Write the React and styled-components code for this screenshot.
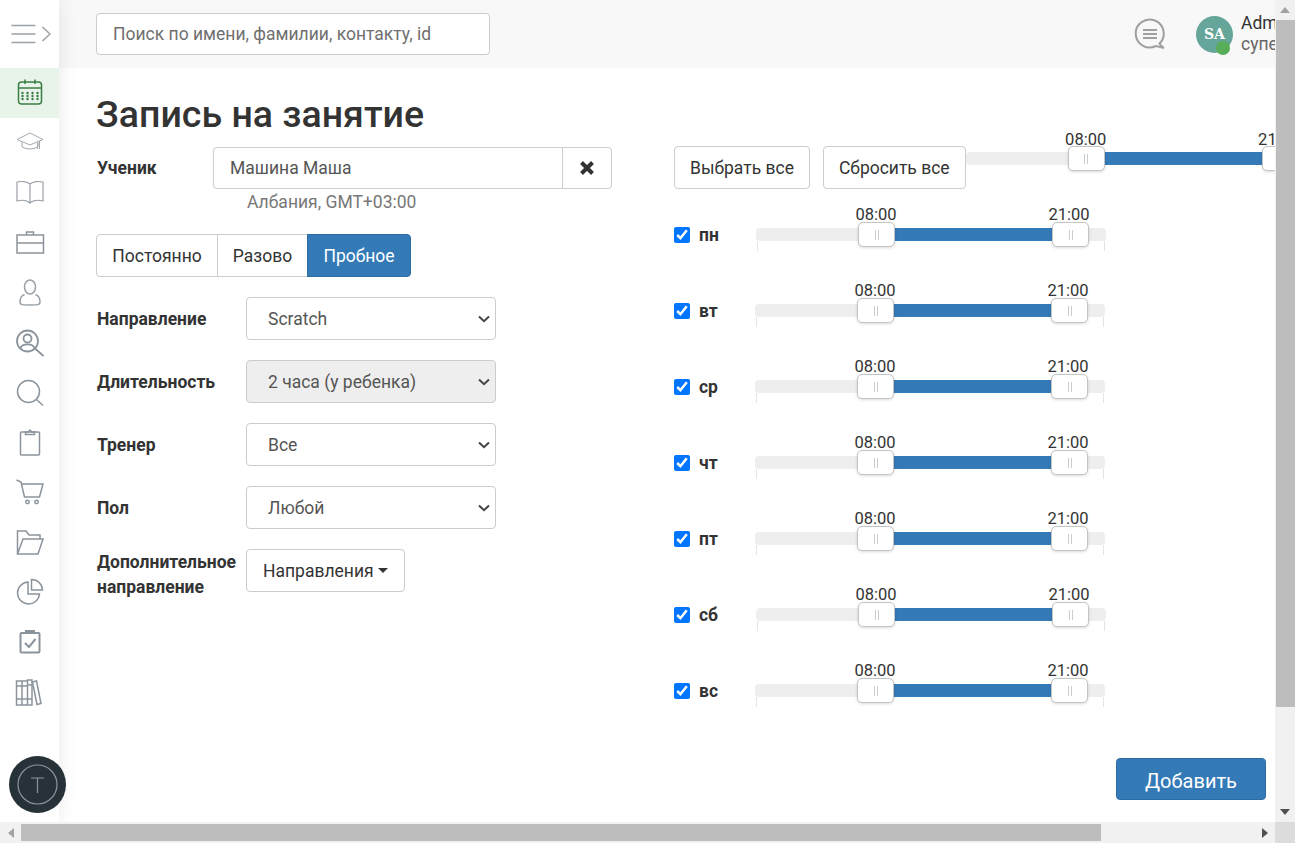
import React from 'react';
import styled, { createGlobalStyle } from 'styled-components';

const GlobalStyle = createGlobalStyle`
    html, body {
        margin: 0;
        padding: 0;
        height: 100%;
        overflow: hidden;
    }
    body {
        font-family: "Roboto", "Liberation Sans", sans-serif;
        font-size: 17.5px;
        color: #333;
        background: #fff;
    }
    * {
        box-sizing: border-box;
    }
`;

const CHEVRON = "url(\"data:image/svg+xml,%3Csvg xmlns='http://www.w3.org/2000/svg' width='12' height='8'%3E%3Cpath d='M1 1.5L6 6.2L11 1.5' fill='none' stroke='%23444' stroke-width='2'/%3E%3C/svg%3E\")";

const Shell = styled.div`
    display: flex;
    flex-direction: column;
    height: 100vh;
`;

const Middle = styled.div`
    display: flex;
    flex: 1;
    min-height: 0;
`;

const Viewport = styled.div`
    display: flex;
    flex: 1;
    min-width: 0;
    overflow: hidden;
`;

const Sidebar = styled.nav`
    position: relative;
    z-index: 2;
    display: flex;
    flex-direction: column;
    flex: 0 0 59px;
    width: 59px;
    min-width: 0;
    background: #fff;
    box-shadow: 0 0 20px rgba(0, 0, 0, 0.09);
`;

const Burger = styled.div`
    display: flex;
    align-items: center;
    justify-content: center;
    height: 68px;
`;

const NavItem = styled.div`
    display: flex;
    align-items: center;
    justify-content: center;
    height: 50px;
    background: ${(p) => (p.$active ? '#e8f3e9' : 'transparent')};
`;

const Ticket = styled.div`
    display: flex;
    align-items: center;
    justify-content: center;
    align-self: flex-start;
    flex: 0 0 57px;
    width: 57px;
    margin: auto 0 9px 9px;
    border-radius: 50%;
    background: #263238;
`;

const Main = styled.div`
    display: flex;
    flex-direction: column;
    flex: 1;
    min-width: 0;
`;

const Header = styled.header`
    display: flex;
    align-items: center;
    flex: 0 0 68px;
    padding-left: 37px;
    background: #f8f8f8;
`;

const SearchInput = styled.input`
    width: 394px;
    height: 42px;
    padding: 0 16px;
    border: 1px solid #ccc;
    border-radius: 4px;
    background: #fff;
    font: inherit;
    color: #555;
    &::placeholder {
        color: #6f6f6f;
        opacity: 1;
    }
`;

const HeaderRight = styled.div`
    display: flex;
    align-items: center;
    margin-left: auto;
    width: 141px;
    overflow: hidden;
    svg {
        flex: none;
    }
`;

const Avatar = styled.div`
    position: relative;
    display: flex;
    align-items: center;
    justify-content: center;
    flex: 0 0 37px;
    height: 37px;
    margin: 0 8px 0 30px;
    border-radius: 50%;
    background: #66a59a;
    color: #fff;
    font-family: "DejaVu Serif", "Liberation Serif", serif;
    font-size: 14px;
    font-weight: 700;
`;

const OnlineDot = styled.span`
    position: absolute;
    left: 20px;
    bottom: -2px;
    width: 14px;
    height: 14px;
    border-radius: 50%;
    background: #58ad58;
`;

const UserBlock = styled.div`
    flex: none;
`;

const UserName = styled.div`
    white-space: nowrap;
    line-height: 21px;
    color: #333;
`;

const UserRole = styled.div`
    white-space: nowrap;
    line-height: 21px;
    color: #666;
`;

const Content = styled.main`
    display: flex;
    flex: 1;
    min-height: 0;
    gap: 62px;
    padding-left: 37px;
    background: #fff;
`;

const LeftColumn = styled.section`
    flex: 0 0 516px;
`;

const Title = styled.h1`
    margin: 24px 0 10px;
    font-size: 37.5px;
    font-weight: 500;
    line-height: 45px;
    color: #333;
`;

const StudentRow = styled.div`
    display: flex;
    align-items: center;
`;

const StudentLabel = styled.label`
    flex: 0 0 117px;
    padding-left: 1px;
    font-weight: 700;
    color: #333;
`;

const StudentInput = styled.input`
    flex: 1;
    min-width: 0;
    height: 42px;
    padding: 0 16px;
    border: 1px solid #ccc;
    border-radius: 4px 0 0 4px;
    font: inherit;
    color: #555;
`;

const ClearButton = styled.button`
    display: flex;
    align-items: center;
    justify-content: center;
    flex: 0 0 50px;
    height: 42px;
    margin-left: -1px;
    border: 1px solid #ccc;
    border-radius: 0 4px 4px 0;
    background: #fff;
`;

const Hint = styled.div`
    margin: 2px 0 20px 151px;
    line-height: 23px;
    color: #777;
`;

const Toggle = styled.div`
    display: flex;
    margin-bottom: 20px;
`;

const ToggleButton = styled.button`
    width: ${(p) => p.$width}px;
    height: 43px;
    margin-left: -1px;
    border: 1px solid ${(p) => (p.$active ? '#2e6da4' : '#ccc')};
    background: ${(p) => (p.$active ? '#337ab7' : '#fff')};
    color: ${(p) => (p.$active ? '#fff' : '#333')};
    font: inherit;
    &:first-child {
        margin-left: 0;
        border-radius: 4px 0 0 4px;
    }
    &:last-child {
        border-radius: 0 4px 4px 0;
    }
`;

const FormRow = styled.div`
    display: flex;
    align-items: ${(p) => (p.$alignTop ? 'flex-start' : 'center')};
    margin-bottom: 20px;
`;

const FormLabel = styled.label`
    flex: 0 0 150px;
    padding: 2px 0 0 1px;
    margin-top: ${(p) => (p.$alignTop ? '-1px' : '0')};
    font-weight: 700;
    line-height: 25px;
    color: #333;
`;

const Select = styled.select`
    width: 250px;
    height: 43px;
    padding: 0 24px 0 21px;
    border: 1px solid #ccc;
    border-radius: 4px;
    appearance: none;
    background: ${(p) => (p.disabled ? '#eee' : '#fff')} ${CHEVRON} no-repeat right 5px center;
    font: inherit;
    color: #555;
    opacity: 1;
`;

const DropdownButton = styled.button`
    display: flex;
    align-items: center;
    height: 43px;
    padding: 0 16px;
    border: 1px solid #ccc;
    border-radius: 4px;
    background: #fff;
    font: inherit;
    color: #333;
`;

const Caret = styled.span`
    width: 0;
    height: 0;
    margin-left: 4px;
    border-top: 5px solid #333;
    border-left: 5px solid transparent;
    border-right: 5px solid transparent;
`;

const RightColumn = styled.section`
    display: flex;
    flex-direction: column;
    flex: 1;
    min-width: 0;
    padding: 78px 9px 0 0;
`;

const TopRow = styled.div`
    display: flex;
    align-items: center;
    flex: 0 0 43px;
    margin-bottom: 8px;
`;

const PlainButton = styled.button`
    flex: none;
    height: 43px;
    margin-right: ${(p) => p.$gap || 0}px;
    padding: 0 15px;
    border: 1px solid #ccc;
    border-radius: 4px;
    background: #fff;
    font: inherit;
    color: #333;
`;

const DayRow = styled.div`
    display: flex;
    align-items: center;
    height: 76px;
`;

const DayCheck = styled.input`
    flex: none;
    width: 16px;
    height: 16px;
    margin: 0 9px 0 0;
`;

const DayName = styled.span`
    flex: 0 0 ${(p) => 56 + p.$shift}px;
    font-weight: 700;
    color: #333;
`;

const SliderTrack = styled.div`
    position: relative;
    flex: 0 0 350px;
    height: 13px;
    align-self: ${(p) => (p.$top ? 'flex-start' : 'center')};
    margin: ${(p) => (p.$top ? '6px 0 0' : '0 0 1px')};
    border-radius: 4px;
    background: #eee;
    &::before, &::after {
        content: "";
        position: absolute;
        top: 13px;
        width: 1px;
        height: ${(p) => (p.$top ? 0 : 10)}px;
        background: #e4e4e4;
    }
    &::before {
        left: 1px;
    }
    &::after {
        right: 1px;
    }
`;

const SliderFill = styled.div`
    position: absolute;
    top: 0;
    bottom: 0;
    left: 119px;
    right: 54px;
    background: #337ab7;
`;

const Handle = styled.div`
    position: absolute;
    top: -6px;
    left: ${(p) => p.$left}px;
    display: flex;
    align-items: center;
    justify-content: center;
    gap: 2px;
    width: 37px;
    height: 25px;
    border: 1px solid #c4c4c4;
    border-radius: 5px;
    background: #fff;
    box-shadow: 0 1px 3px rgba(0, 0, 0, 0.15);
    i {
        width: 1px;
        height: 10px;
        background: #ccc;
    }
`;

const HandleLabel = styled.span`
    position: absolute;
    top: ${(p) => (p.$top ? -22 : -23)}px;
    left: ${(p) => p.$left}px;
    width: 52px;
    text-align: center;
    font-size: 16.5px;
    line-height: 20px;
    color: #333;
`;

const Actions = styled.div`
    display: flex;
    justify-content: flex-end;
    margin-top: 29px;
`;

const PrimaryButton = styled.button`
    width: 150px;
    height: 42px;
    padding-top: 4px;
    border: 1px solid #2e6da4;
    border-radius: 4px;
    background: #337ab7;
    color: #fff;
    font-family: inherit;
    font-size: 20px;
`;

const VScroll = styled.div`
    display: flex;
    flex-direction: column;
    flex: 0 0 20px;
    background: #f1f1f1;
`;

const VThumb = styled.div`
    flex: 0 0 687px;
    margin-left: 1px;
    background: #bdbdbd;
`;

const ArrowBox = styled.div`
    display: flex;
    align-items: center;
    justify-content: center;
    flex: 0 0 ${(p) => p.$size}px;
    margin-top: ${(p) => (p.$end ? 'auto' : '0')};
    margin-left: ${(p) => (p.$endX ? 'auto' : '0')};
`;

const HScroll = styled.div`
    display: flex;
    flex: 0 0 21px;
    background: #f1f1f1;
`;

const HThumb = styled.div`
    flex: 0 0 1080px;
    margin: 2px 0;
    background: #bdbdbd;
`;

const Corner = styled.div`
    flex: 0 0 20px;
    background: #dcdcdc;
`;

const Triangle = styled.span`
    width: 0;
    height: 0;
    border-style: solid;
    border-color: transparent;
    ${(p) => p.$dir === 'up' && 'border-width: 0 5px 6px; border-bottom-color: #a3a3a3;'}
    ${(p) => p.$dir === 'down' && 'border-width: 6px 5px 0; border-top-color: #505050;'}
    ${(p) => p.$dir === 'left' && 'border-width: 5px 6px 5px 0; border-right-color: #a3a3a3;'}
    ${(p) => p.$dir === 'right' && 'border-width: 5px 0 5px 6px; border-left-color: #505050;'}
`;

const Glyph = ({ children, color = '#8b949c', width = 1.5 }) => (
    <svg width="30" height="30" viewBox="0 0 30 30" fill="none" stroke={color} strokeWidth={width}>
        {children}
    </svg>
);

const NAV_ICONS = [
    <Glyph color="#3a7d44" key="calendar">
        <rect x="3.5" y="4" width="23" height="22" rx="3" />
        <path d="M3.5 10H26.5M10 1.5V6M20 1.5V6" />
        {[15, 18, 21].map((y) => [7.5, 12.5, 17.5, 22.5].map((x) => (
            <circle key={`${x}-${y}`} cx={x} cy={y} r="1.2" fill="#3a7d44" stroke="none" />
        )))}
    </Glyph>,
    <Glyph key="hat" color="#a3a9ae" width={1}>
        <path d="M15 5L28 11.5L15 17L2 11.5Z" />
        <path d="M7 14V19Q15 23 23 19V14M24.5 13V21M22.5 15V21" />
    </Glyph>,
    <Glyph key="book" color="#9aa1a7" width={1.2}>
        <path d="M15 6C12 3.5 6 3 2 4V23C6 22 12 22 15 25C18 22 24 22 28 23V4C24 3 18 3.5 15 6ZM15 6V25" />
    </Glyph>,
    <Glyph key="case">
        <rect x="2" y="7" width="26.5" height="18" />
        <path d="M2 15H28.5M11.5 7V4H18.5V7" />
    </Glyph>,
    <Glyph key="user" color="#9aa1a7">
        <ellipse cx="15" cy="9" rx="5.5" ry="7" />
        <path d="M9.5 16.5C5 18 5 22 5 24C5 27 8 27 15 27C22 27 25 27 25 24C25 22 25 18 20.5 16.5" />
    </Glyph>,
    <Glyph key="find-user" width={1.8}>
        <circle cx="12.5" cy="13" r="10.5" />
        <circle cx="12.5" cy="10.5" r="4" />
        <path d="M5.5 20.5C6.5 15 18.5 15 19.5 20.5M20 20.5L28.5 28" />
    </Glyph>,
    <Glyph key="search">
        <circle cx="13.5" cy="13.5" r="11" />
        <path d="M21.5 21.5L28 27.5" />
    </Glyph>,
    <Glyph key="clipboard">
        <rect x="5.5" y="4" width="19" height="23" rx="1" />
        <path d="M10.5 4V6.5H19.5V4H17L15 2L13 4Z" />
    </Glyph>,
    <Glyph key="cart">
        <path d="M1.5 2L6 4L9.5 19H24.5L28 6H6.5" />
        <circle cx="12.5" cy="24" r="1.7" />
        <circle cx="21.5" cy="24" r="1.7" />
    </Glyph>,
    <Glyph key="folder">
        <path d="M2.5 26V3H11L14 7H25V11M2.5 26L8 11H28L23 26Z" />
    </Glyph>,
    <Glyph key="pie">
        <path d="M13 4A11 11 0 1 0 24.5 16H13Z" />
        <path d="M16.5 1.5V12H27.5A11 11 0 0 0 16.5 1.5Z" />
    </Glyph>,
    <Glyph key="task" width={2}>
        <rect x="5.5" y="5" width="19" height="19.5" rx="1" />
        <path d="M11 5V3H19V5M10 15L14 19L20.5 11" />
    </Glyph>,
    <Glyph key="books" width={1.5}>
        <path d="M1.5 3H7V27H1.5ZM7 3H12.5V27H7ZM12.5 2H17V27H12.5ZM1.5 8H12.5M1.5 21H12.5M12.5 7H17M12.5 21H17" />
        <path d="M17.5 4L21.5 3L26 25.5L22 26.5Z" />
    </Glyph>
];

const DAYS = [
    { name: 'пн', shift: 1 },
    { name: 'вт', shift: 0 },
    { name: 'ср', shift: 0 },
    { name: 'чт', shift: 0 },
    { name: 'пт', shift: 0 },
    { name: 'сб', shift: 1 },
    { name: 'вс', shift: 0 }
];

function TimeSlider({ top }) {
    return (
        <SliderTrack $top={top}>
            <SliderFill />
            <HandleLabel $left={94} $top={top}>08:00</HandleLabel>
            <Handle $left={102}><i /><i /></Handle>
            <HandleLabel $left={287} $top={top}>21:00</HandleLabel>
            <Handle $left={296}><i /><i /></Handle>
        </SliderTrack>
    );
}

export default function App() {
    return (
        <Shell>
            <GlobalStyle />
            <Middle>
                <Viewport>
                    <Sidebar>
                        <Burger>
                            <svg width="42" height="24" viewBox="0 0 42 24" fill="none" stroke="#9aa1a7" strokeWidth="1.5">
                                <path d="M2.5 3.5H26.5M2.5 12H26.5M2.5 20.5H26.5M33.5 5L41 12L33.5 19" />
                            </svg>
                        </Burger>
                        {NAV_ICONS.map((icon, i) => (
                            <NavItem key={icon.key} $active={i === 0}>{icon}</NavItem>
                        ))}
                        <Ticket>
                            <svg width="41" height="41" viewBox="0 0 41 41" fill="none" stroke="#8b949c" strokeWidth="1.2">
                                <circle cx="20.5" cy="20.5" r="19.5" />
                                <path d="M14 14H27M20.5 14V29" />
                            </svg>
                        </Ticket>
                    </Sidebar>
                    <Main>
                        <Header>
                            <SearchInput placeholder="Поиск по имени, фамилии, контакту, id" />
                            <HeaderRight>
                                <svg width="32" height="32" viewBox="0 0 32 32" fill="none" stroke="#a0a0a0" strokeWidth="2">
                                    <path d="M25.5 25.5A14 14 0 1 0 22 28L30 30Q27 28.5 25.5 25.5Z" />
                                    <path d="M9 12H23M9 16H23M9 20H23" />
                                </svg>
                                <Avatar>
                                    SA
                                    <OnlineDot />
                                </Avatar>
                                <UserBlock>
                                    <UserName>Admin</UserName>
                                    <UserRole>суперадмин</UserRole>
                                </UserBlock>
                            </HeaderRight>
                        </Header>
                        <Content>
                            <LeftColumn>
                                <Title>Запись на занятие</Title>
                                <StudentRow>
                                    <StudentLabel>Ученик</StudentLabel>
                                    <StudentInput readOnly value="Машина Маша" />
                                    <ClearButton type="button" aria-label="Очистить">
                                        <svg width="16" height="16" viewBox="0 0 16 16" fill="none" stroke="#333" strokeWidth="4">
                                            <path d="M2.5 2.5L13.5 13.5M13.5 2.5L2.5 13.5" />
                                        </svg>
                                    </ClearButton>
                                </StudentRow>
                                <Hint>Албания, GMT+03:00</Hint>
                                <Toggle>
                                    <ToggleButton type="button" $width={122}>Постоянно</ToggleButton>
                                    <ToggleButton type="button" $width={91}>Разово</ToggleButton>
                                    <ToggleButton type="button" $width={104} $active>Пробное</ToggleButton>
                                </Toggle>
                                <FormRow>
                                    <FormLabel>Направление</FormLabel>
                                    <Select defaultValue="Scratch"><option>Scratch</option></Select>
                                </FormRow>
                                <FormRow>
                                    <FormLabel>Длительность</FormLabel>
                                    <Select disabled defaultValue="2 часа (у ребенка)"><option>2 часа (у ребенка)</option></Select>
                                </FormRow>
                                <FormRow>
                                    <FormLabel>Тренер</FormLabel>
                                    <Select defaultValue="Все"><option>Все</option></Select>
                                </FormRow>
                                <FormRow>
                                    <FormLabel>Пол</FormLabel>
                                    <Select defaultValue="Любой"><option>Любой</option></Select>
                                </FormRow>
                                <FormRow $alignTop>
                                    <FormLabel $alignTop>Дополнительное направление</FormLabel>
                                    <DropdownButton type="button">Направления<Caret /></DropdownButton>
                                </FormRow>
                            </LeftColumn>
                            <RightColumn>
                                <TopRow>
                                    <PlainButton type="button" $gap={13}>Выбрать все</PlainButton>
                                    <PlainButton type="button">Сбросить все</PlainButton>
                                    <TimeSlider top />
                                </TopRow>
                                {DAYS.map((day) => (
                                    <DayRow key={day.name}>
                                        <DayCheck type="checkbox" defaultChecked />
                                        <DayName $shift={day.shift}>{day.name}</DayName>
                                        <TimeSlider />
                                    </DayRow>
                                ))}
                                <Actions>
                                    <PrimaryButton type="button">Добавить</PrimaryButton>
                                </Actions>
                            </RightColumn>
                        </Content>
                    </Main>
                </Viewport>
                <VScroll>
                    <ArrowBox $size={20}><Triangle $dir="up" /></ArrowBox>
                    <VThumb />
                    <ArrowBox $size={20} $end><Triangle $dir="down" /></ArrowBox>
                </VScroll>
            </Middle>
            <HScroll>
                <ArrowBox $size={21}><Triangle $dir="left" /></ArrowBox>
                <HThumb />
                <ArrowBox $size={20} $endX><Triangle $dir="right" /></ArrowBox>
                <Corner />
            </HScroll>
        </Shell>
    );
}
